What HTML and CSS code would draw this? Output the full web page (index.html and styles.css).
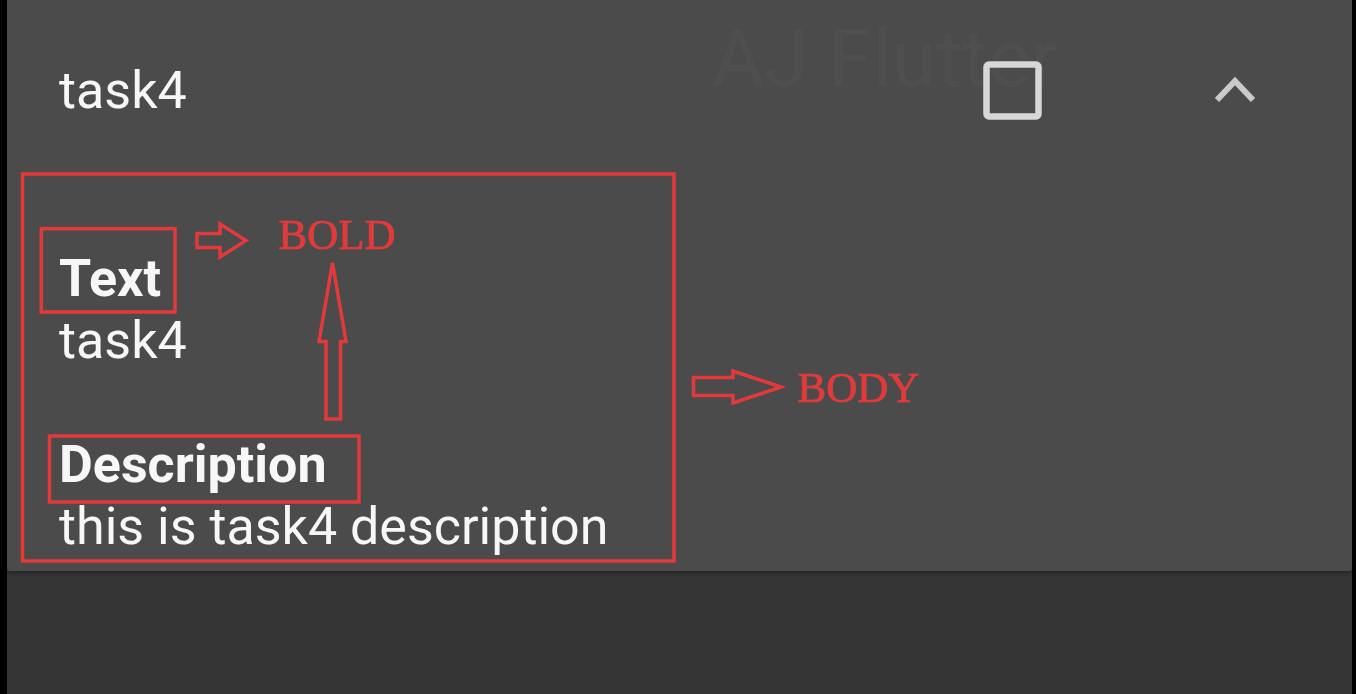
FILE: index.html
```html
<!DOCTYPE html>
<html lang="en">
<head>
<meta charset="utf-8">
<title>task4</title>
<link rel="stylesheet" href="styles.css">
</head>
<body>
<div class="screen">
  <div class="card">
    <div class="tile-header">
      <span class="title">task4</span>
      <svg class="checkbox" width="59" height="59" viewBox="0 0 59 59"><rect x="3.5" y="3.5" width="52" height="52" rx="2.5" fill="none" stroke="#d7d7d7" stroke-width="6.5"/></svg>
      <svg class="chevron" width="44" height="30" viewBox="0 0 44 30"><polyline points="4,24 22,5 40,24" fill="none" stroke="#cacaca" stroke-width="6"/></svg>
    </div>
    <div class="tile-body">
      <p class="label">Text</p>
      <p class="value">task4</p>
      <p class="label gap">Description</p>
      <p class="value">this is task4 description</p>
    </div>
  </div>
  <div class="watermark">AJ Flutter</div>
  <svg class="annotations" width="1345" height="694" viewBox="7 0 1345 694">
    <g fill="none" stroke="#e23a3a" stroke-width="3.5" stroke-linejoin="miter">
      <rect x="22.5" y="174" width="651.5" height="387"/>
      <rect x="41.3" y="228.7" width="133.7" height="83.3"/>
      <rect x="49.5" y="436" width="309.5" height="66"/>
      <polygon points="197,233.5 220,233.5 220,224 246,240.5 220,257 220,247.5 197,247.5"/>
      <polygon points="332.5,263 346,341.5 340.5,341.5 340.5,419 326,419 326,341.5 319,341.5"/>
      <polygon points="693.5,377.5 733,377.5 733,371 781,387 733,403 733,395.5 693.5,395.5"/>
    </g>
    <g class="note">
      <text x="278" y="249">BOLD</text>
      <text x="797" y="402">BODY</text>
    </g>
  </svg>
</div>
</body>
</html>
```
FILE: styles.css
```css
html, body {
  margin: 0;
  padding: 0;
  background: #000;
}
body {
  width: 1356px;
  height: 694px;
  overflow: hidden;
  font-family: Roboto, "Noto Sans", sans-serif;
}
.screen {
  position: relative;
  margin: 0 4px 0 7px;
  height: 694px;
  background: #353535;
}
.card {
  background: #4b4b4b;
  height: 571px;
  border-radius: 0 0 3px 3px;
  box-shadow: 0 2px 4px rgba(0, 0, 0, 0.35);
  color: #f7f7f7;
  font-size: 52px;
  line-height: 62px;
}
.tile-header {
  display: flex;
  align-items: center;
  height: 181px;
  padding: 0 95px 0 52px;
}
.title {
  flex: 1;
}
.checkbox {
  display: block;
  margin-right: 171px;
}
.chevron {
  display: block;
}
.tile-body {
  padding: 67px 0 0 52px;
}
.tile-body p {
  margin: 0;
}
.label {
  font-weight: 700;
}
.label.gap {
  margin-top: 62px;
}
.watermark {
  position: absolute;
  left: 705px;
  top: 14px;
  font-size: 80px;
  line-height: 90px;
  color: rgba(255, 255, 255, 0.025);
  font-family: Roboto, sans-serif;
}
.annotations {
  position: absolute;
  left: 0;
  top: 0;
}
.note text {
  font-family: "Liberation Serif", "DejaVu Serif", serif;
  font-size: 43px;
  fill: #e23a3a;
  stroke: #e23a3a;
  stroke-width: 0.6;
}
```
